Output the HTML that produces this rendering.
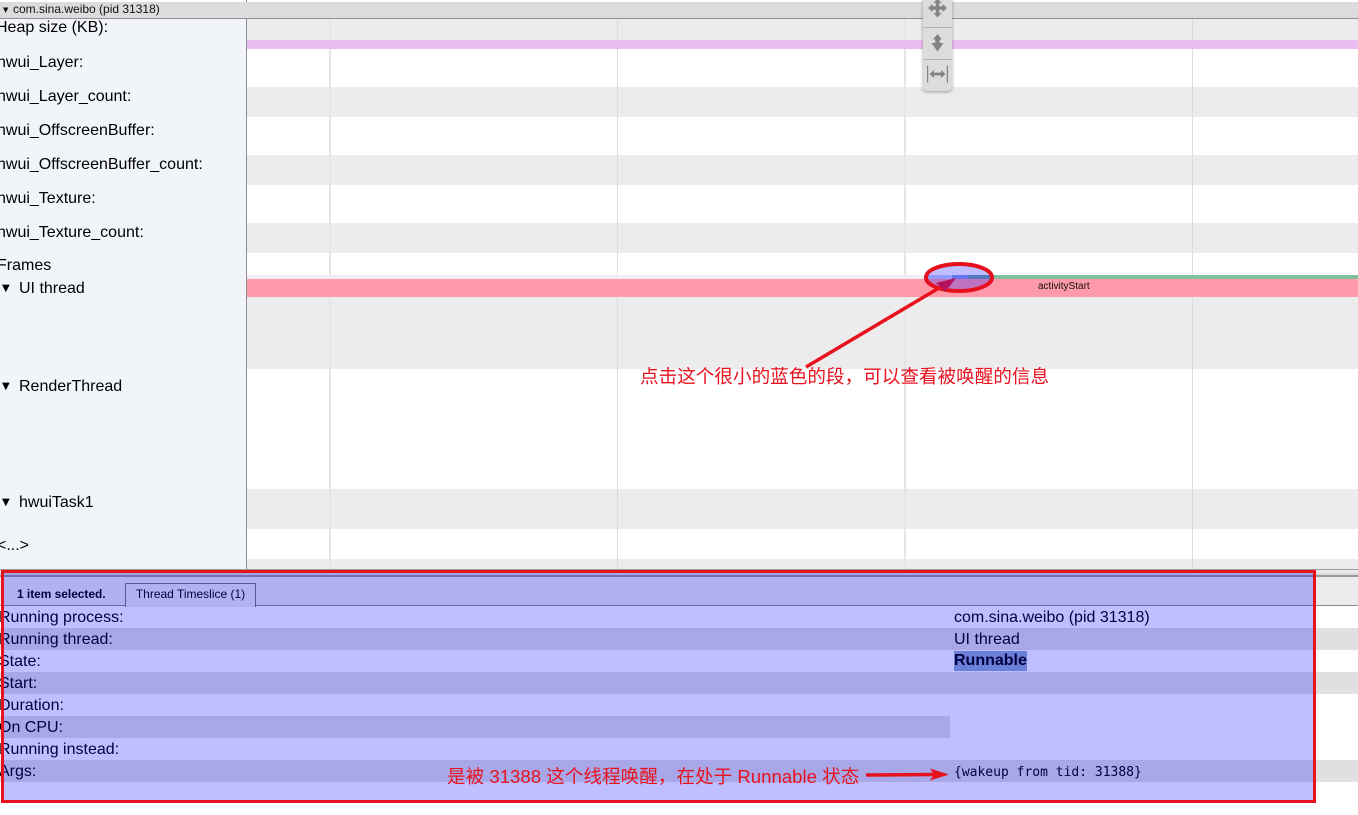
<!DOCTYPE html>
<html lang="zh"><head><meta charset="utf-8"><title>Trace</title>
<style>
html,body{margin:0;padding:0;width:1358px;height:815px;overflow:hidden;background:#fff}
body{position:relative;font-family:"Liberation Sans","Noto Sans CJK SC",sans-serif;color:#000}
.a{position:absolute}
.r{position:absolute;left:247px;width:1111px}
.g{position:absolute;width:2px;background:#e6e6e6}
.l{position:absolute;left:-3px;font-size:16px;line-height:18px;white-space:nowrap}
.m{position:absolute;left:2px;font-size:10px;line-height:18px;white-space:nowrap;font-family:"DejaVu Sans",sans-serif}
.m span{position:absolute;left:17px;top:0;font:16px/18px "Liberation Sans",sans-serif}
.d{position:absolute;left:0;width:1358px;height:22px;font-size:16px;line-height:22px;white-space:nowrap}
.d span{position:absolute;left:-1px;top:1px}
.d b,.d i{position:absolute;left:954px;font-style:normal}
.d i{top:1px}
.gy{background:#e0e0e0}
.t{position:absolute;color:#e8121f;white-space:nowrap;font-family:"Liberation Sans","WenQuanYi Zen Hei","Noto Sans CJK SC",sans-serif}
</style></head><body>
<div class="a" style="left:0;top:2px;width:1358px;height:16px;background:#dcdcdc;border-bottom:1px solid #8f8f8f"></div>
<div class="a" style="left:2px;top:2px;font-size:12px;line-height:15px;color:#111;white-space:nowrap"><span style="font:7px/15px 'DejaVu Sans',sans-serif;position:absolute;left:1px;top:1px">▼</span><span style="position:absolute;left:11px;top:0">com.sina.weibo (pid 31318)</span></div>
<div class="a" style="left:246px;top:0;width:1px;height:2px;background:#888"></div>

<div class="r" style="top:19px;height:21px;background:#ececec"></div>
<div class="r" style="top:87px;height:30px;background:#ececec"></div>
<div class="r" style="top:155px;height:30px;background:#ececec"></div>
<div class="r" style="top:223px;height:30px;background:#ececec"></div>
<div class="r" style="top:297px;height:72px;background:#ececec"></div>
<div class="r" style="top:489px;height:40px;background:#ececec"></div>
<div class="r" style="top:559px;height:11px;background:#ececec"></div>

<div class="g" style="left:329px;top:19px;height:256px"></div>
<div class="g" style="left:329px;top:297px;height:273px"></div>
<div class="g" style="left:617px;top:19px;height:256px;width:1px;background:#dcdcdc"></div>
<div class="g" style="left:617px;top:297px;height:273px;width:1px;background:#dcdcdc"></div>
<div class="g" style="left:904px;top:19px;height:256px"></div>
<div class="g" style="left:904px;top:297px;height:273px"></div>
<div class="g" style="left:1192px;top:19px;height:256px;width:1px;background:#dcdcdc"></div>
<div class="g" style="left:1192px;top:297px;height:273px;width:1px;background:#dcdcdc"></div>
<div class="r" style="top:40px;height:9px;background:#ebbdf2"></div>

<div class="r" style="top:275px;height:4px;background:#f1edf3"></div>
<div class="r" style="top:279px;height:18px;background:#ff9aaa"></div>
<div class="a" style="left:992px;top:275px;width:366px;height:4px;background:#80c09c"></div>
<div class="a" style="left:968px;top:275px;width:24px;height:4px;background:#6fa0a8"></div>
<div class="a" style="left:952px;top:275px;width:16px;height:4px;background:#8a9ce8"></div>
<div class="a" style="left:926px;top:275px;width:26px;height:4px;background:#c6ccf8"></div>
<div class="a" style="left:1038px;top:280px;font-size:10px;line-height:13px;color:#111;white-space:nowrap">activityStart</div>

<div class="a" style="left:0;top:19px;width:246px;height:551px;background:#f1f5f9;border-right:1px solid #8f8f8f;overflow:hidden">
<div class="l" style="top:0;left:-4px">Heap size (KB):</div>
<div class="l" style="top:35px">hwui_Layer:</div>
<div class="l" style="top:69px">hwui_Layer_count:</div>
<div class="l" style="top:103px">hwui_OffscreenBuffer:</div>
<div class="l" style="top:137px">hwui_OffscreenBuffer_count:</div>
<div class="l" style="top:171px">hwui_Texture:</div>
<div class="l" style="top:205px">hwui_Texture_count:</div>
<div class="l" style="top:238px">Frames</div>
<div class="m" style="top:261px">▼<span>UI thread</span></div>
<div class="m" style="top:359px">▼<span>RenderThread</span></div>
<div class="m" style="top:475px">▼<span>hwuiTask1</span></div>
<div class="l" style="top:518px">&lt;...&gt;</div>
</div>

<div class="a" style="left:923px;top:-4px;width:29px;height:95px;background:#dcdcdc;border-radius:0 0 4px 4px;box-shadow:0 1px 3px rgba(0,0,0,.35)">
<div class="a" style="left:0;top:31px;width:29px;height:1px;background:#b4b4b4"></div>
<div class="a" style="left:0;top:63px;width:29px;height:1px;background:#b4b4b4"></div>
<svg class="a" style="left:0;top:4px" width="29" height="91" viewBox="0 4 29 91" fill="#838383">
<path d="M14.500 2.500l4 4.500h-2.300v3.300h3.300V8l4.500 4-4.500 4v-2.300h-3.300V17h2.300l-4 4.500-4-4.500h2.300v-3.300H9.500V16L5 12l4.500-4v2.300h3.300V7h-2.300z"/>
<path d="M14.500 38l4.500 5.500h-2.200v3.500H20.500L14.500 55.500l-6-8.500h3.700v-3.500H10z"/>
<path d="M4 69.500h1.200v17H4zM23.800 69.500H25v17h-1.200zM6.500 78l4.500-4v2.600h7V74l4.500 4-4.500 4v-2.600h-7V82z"/>
</svg>
</div>

<div class="a" style="left:0;top:569px;width:1358px;height:1px;background:#999"></div>
<div class="a" style="left:0;top:570px;width:1358px;height:5px;background:linear-gradient(#eeeeee,#d8d8d8)"></div>
<div class="a" style="left:0;top:575px;width:1358px;height:2px;background:#999"></div>
<div class="a" style="left:0;top:577px;width:1358px;height:28px;background:#ececec"></div>
<div class="a" style="left:0;top:605px;width:1358px;height:1px;background:#8a8a8a"></div>
<div class="a" style="left:17px;top:587px;font-size:11.900px;line-height:14px;font-weight:bold;white-space:nowrap">1 item selected.</div>
<div class="a" style="left:125px;top:583px;width:129px;height:23px;background:#ececec;border:1px solid #777;border-bottom:0;font-size:12px;line-height:21px;text-align:center;white-space:nowrap">Thread Timeslice (1)</div>

<div class="d" style="top:606px"><span>Running process:</span><i>com.sina.weibo (pid 31318)</i></div>
<div class="d gy" style="top:628px"><span>Running thread:</span><i>UI thread</i></div>
<div class="d" style="top:650px"><span>State:</span><b style="top:1px;height:20px;line-height:20px;background:#8faacb">Runnable</b></div>
<div class="d gy" style="top:672px"><span>Start:</span></div>
<div class="d" style="top:694px"><span>Duration:</span></div>
<div class="d" style="top:716px;width:950px;background:#e0e0e0"><span>On CPU:</span></div>
<div class="d" style="top:738px"><span>Running instead:</span></div>
<div class="d gy" style="top:760px"><span>Args:</span><i style="top:2px;font-family:'DejaVu Sans Mono','Liberation Mono',monospace;font-size:13px;line-height:22px">{wakeup from tid: 31388}</i></div>

<div class="a" style="left:1px;top:570px;width:1309px;height:227px;background:rgba(0,0,255,.25);border:3px solid #e8121f"></div>

<svg class="a" style="left:0;top:0" width="1358" height="815" viewBox="0 0 1358 815">
<ellipse cx="959" cy="277.500" rx="33" ry="13.500" fill="rgba(0,0,255,.25)" stroke="#e4101c" stroke-width="4"/>
<path d="M806 367L944 285" stroke="#e8121f" stroke-width="3.500" fill="none"/>
<path d="M956 278L936 283L941 287L945 292z" fill="#b5125c"/>
<path d="M866 775L934 774.500" stroke="#e8121f" stroke-width="3.500" fill="none"/>
<path d="M949 774.500L930 768.500L934 774.500L930 780.500z" fill="#e8121f"/>
</svg>

<div class="t" style="left:640px;top:366px;font-size:18.600px;line-height:22px">点击这个很小的蓝色的段，可以查看被唤醒的信息</div>
<div class="t" style="left:447px;top:766px;font-size:18.600px;line-height:22px">是被 31388 这个线程唤醒，在处于 Runnable 状态</div>
</body></html>
